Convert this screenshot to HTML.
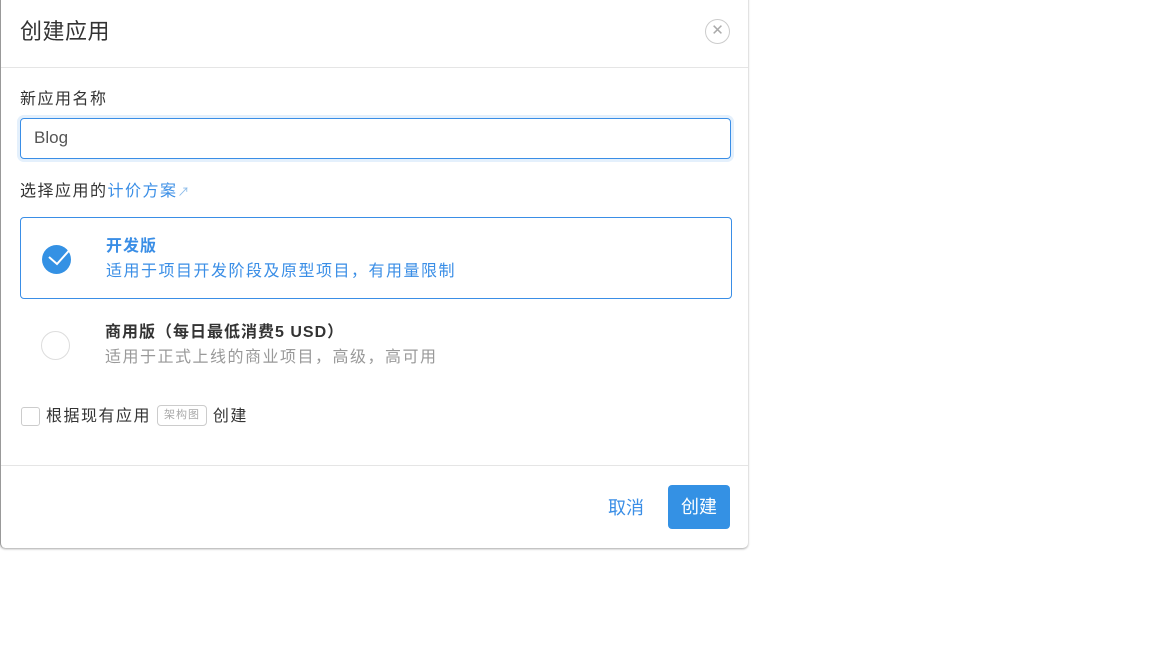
<!DOCTYPE html>
<html><head><meta charset="utf-8"><style>
*{box-sizing:border-box;margin:0;padding:0}
body{width:1152px;height:648px;background:#fff;font-family:"Liberation Sans","Noto Sans CJK SC",sans-serif;position:relative;overflow:hidden;color:#333}
.dlg{position:absolute;left:0;top:-6px;width:748px;height:554px;background:#fff;border-left:1px solid #999;border-radius:0 0 5px 5px;box-shadow:0 1px 2px rgba(0,0,0,.35)}
.t{position:absolute;left:19px;top:20px;font-size:22px;color:#333;letter-spacing:0.5px}
.x{position:absolute;left:704px;top:25px;width:25px;height:25px;border:1px solid #ccc;border-radius:50%;color:#aaa;font-size:15px;text-align:center;line-height:22px}
.hr{position:absolute;left:0;right:0;height:1px;background:#e5e5e5}
.lbl{position:absolute;left:19px;font-size:16px;color:#333;letter-spacing:1.5px}
.inp{position:absolute;left:19px;top:124px;width:711px;height:41px;border:1px solid #3a8ee6;border-radius:4px;box-shadow:0 0 0 3px #e4f0fc;font-size:17px;color:#555;padding:9px 13px}
.opt{position:absolute;left:19px;width:712px;height:82px;border-radius:4px}
.sel{border:1px solid #3a8ee6}
.rad{position:absolute;left:21px;top:27px;width:29px;height:29px;border-radius:50%}
.h{position:absolute;left:85px;top:14px;font-size:16px;font-weight:bold;letter-spacing:1px}
.d{position:absolute;left:85px;top:39px;font-size:16px;letter-spacing:1.5px}
.btn{position:absolute;left:668px;top:485px;width:62px;height:44px;background:#3491e4;border-radius:4px;color:#fff;font-size:18px;text-align:center;line-height:44px}
</style></head><body>
<div class="dlg">
<div class="t">创建应用</div>
<div class="x">✕</div>
<div class="hr" style="top:73px"></div>
<div class="lbl" style="top:91px">新应用名称</div>
<div class="inp">Blog</div>
<div class="lbl" style="top:183px">选择应用的<span style="color:#3a8ee6">计价方案</span><span style="color:#8bbbe9;font-size:12px">↗</span></div>
<div class="opt sel" style="top:223px">
 <div class="rad" style="background:#3491e4"><svg width="36" height="30" viewBox="0 0 36 30" style="position:absolute;left:4px;top:-5px"><path d="M3 17 L11 24 L28 5" stroke="#fff" stroke-width="2" fill="none"/></svg></div>
 <div class="h" style="color:#3a8ee6">开发版</div>
 <div class="d" style="color:#3a8ee6">适用于项目开发阶段及原型项目，有用量限制</div>
</div>
<div class="opt" style="top:310px">
 <div class="rad" style="border:1px solid #ddd"></div>
 <div class="h" style="color:#333">商用版（每日最低消费5 USD）</div>
 <div class="d" style="color:#999">适用于正式上线的商业项目，高级，高可用</div>
</div>
<div style="position:absolute;left:20px;top:413px;width:19px;height:19px;border:1px solid #ccc;border-radius:3px"></div>
<div class="lbl" style="left:45px;top:408px">根据现有应用 <span style="display:inline-block;border:1px solid #ccc;border-radius:4px;font-size:11px;color:#aaa;padding:0 6px;line-height:19px;vertical-align:3px;letter-spacing:1px">架构图</span> 创建</div>
<div class="hr" style="top:471px"></div>
<div style="position:absolute;left:607px;top:500px;font-size:18px;color:#3a8ee6">取消</div>
</div>
<div class="btn">创建</div>
</body></html>
